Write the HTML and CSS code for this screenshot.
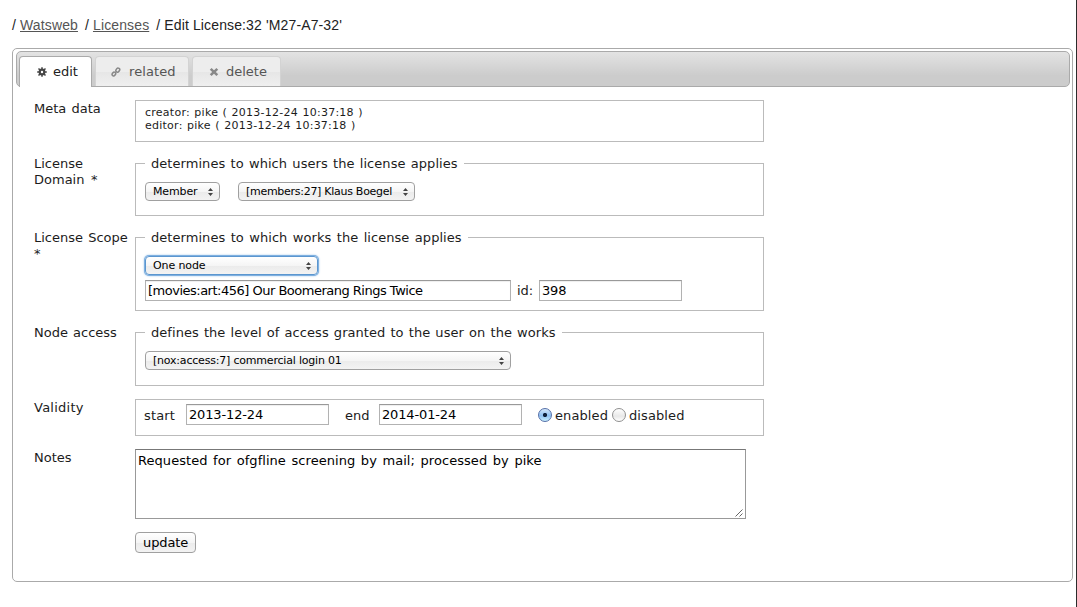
FILE: index.html
```html
<!DOCTYPE html>
<html lang="en">
<head>
<meta charset="utf-8">
<title>Edit License:32 'M27-A7-32'</title>
<link rel="stylesheet" href="styles.css">
</head>
<body>
<div class="page">
  <nav class="crumbs"><span class="sep">/</span><a>Watsweb</a><span class="sep next">/</span><a>Licenses</a><span class="sep next">/</span><span>Edit License:32 'M27-A7-32'</span></nav>
  <main class="panel">
    <div class="tabbar">
      <div class="tab active"><svg class="icon" width="10" height="10" viewBox="0 0 10 10"><path fill="none" stroke="#454545" stroke-width="1.5" d="M5 .2v9.6M.2 5h9.6M1.5 1.5l7 7M8.5 1.5l-7 7"/><circle cx="5" cy="5" r="3.4" fill="#454545"/><circle cx="5" cy="5" r="1.2" fill="#fff"/></svg><span>edit</span></div>
      <div class="tab related"><svg class="icon" width="10" height="10" viewBox="0 0 10 10"><g fill="none" stroke="#888" stroke-width="1.5"><rect x="5.2" y="1" width="3.2" height="4.2" rx="1.5" transform="rotate(35 6.8 3.1)"/><rect x="1.4" y="5" width="3" height="4" rx="1.5" transform="rotate(35 2.9 7)"/></g></svg><span>related</span></div>
      <div class="tab delete"><svg class="icon" width="10" height="10" viewBox="0 0 10 10"><path fill="none" stroke="#888" stroke-width="2.6" d="M1.7 1.9l6.6 6.2M8.3 1.9l-6.6 6.2"/></svg><span>delete</span></div>
    </div>
    <form class="form">
      <div class="row r-meta"><div class="label">Meta data</div>
        <fieldset>creator: pike ( 2013-12-24 10:37:18 )<br>editor: pike ( 2013-12-24 10:37:18 )</fieldset></div>
      <div class="row r-domain"><div class="label">License<br>Domain *</div>
        <fieldset><legend>determines to which users the license applies</legend>
          <div class="controls"><span class="select w75">Member<svg class="arrows" width="5" height="8" viewBox="0 0 5 8"><path fill="#444" d="M2.5 0L5 3H0zM2.5 8L0 5h5z"/></svg></span><span class="select tight w177">[members:27] Klaus Boegel<svg class="arrows" width="5" height="8" viewBox="0 0 5 8"><path fill="#444" d="M2.5 0L5 3H0zM2.5 8L0 5h5z"/></svg></span></div></fieldset></div>
      <div class="row r-scope"><div class="label">License Scope<br>*</div>
        <fieldset><legend>determines to which works the license applies</legend>
          <div class="controls"><span class="select focus w173">One node<svg class="arrows" width="5" height="8" viewBox="0 0 5 8"><path fill="#444" d="M2.5 0L5 3H0zM2.5 8L0 5h5z"/></svg></span></div>
          <div class="target"><span class="input title w366">[movies:art:456] Our Boomerang Rings Twice</span><span class="idlabel">id:</span><span class="input w143">398</span></div></fieldset></div>
      <div class="row r-access"><div class="label">Node access</div>
        <fieldset><legend>defines the level of access granted to the user on the works</legend>
          <div class="controls"><span class="select access w366">[nox:access:7] commercial login 01<svg class="arrows" width="5" height="8" viewBox="0 0 5 8"><path fill="#444" d="M2.5 0L5 3H0zM2.5 8L0 5h5z"/></svg></span></div></fieldset></div>
      <div class="row r-validity"><div class="label">Validity</div>
        <fieldset class="validity"><span class="start">start</span><span class="input w143">2013-12-24</span><span class="end">end</span><span class="input w143">2014-01-24</span><span class="radio on"></span><span class="rlabel">enabled</span><span class="radio"></span><span class="rlabel">disabled</span></fieldset></div>
      <div class="row r-notes"><div class="label">Notes</div>
        <div class="textarea">Requested for ofgfline screening by mail; processed by pike<svg class="grip" width="8" height="8" viewBox="0 0 8 8"><path fill="none" stroke="#555" stroke-width=".9" d="M.5 7.5l7-7M4.5 7.5l3-3"/></svg></div></div>
      <div class="row"><div class="label"></div><span class="button">update</span></div>
    </form>
  </main>
</div>
</body>
</html>
```
FILE: styles.css
```css
* { box-sizing: border-box; }
body { margin: 0; background: #fff; color: #1c1c1c; font: 13px/16px "DejaVu Sans", sans-serif; }
.page { height: 607px; border-right: 1px solid #2b2b2b; padding: 17px 3px 0 12px; overflow: hidden; }
.crumbs { height: 31px; font: 14px/17px "Liberation Sans", Arial, sans-serif; white-space: nowrap; color: #222; letter-spacing: 0.13px; }
.crumbs a { color: #555; text-decoration: underline; }
.sep { display: inline-block; width: 8px; }
.sep.next { width: 15px; padding-left: 7px; }
.panel { height: 534px; border: 1px solid #aaa; border-radius: 5px; padding: 2px 2px 2px 3px; }
.tabbar { height: 36px; border: 1px solid #aaa; border-radius: 5px; background: linear-gradient(#e3e3e3, #ccc 70%, #ccc); display: flex; padding: 4px 0 0 2px; gap: 3px; }
.tab { height: 30px; border: 1px solid #d3d3d3; border-bottom: 0; border-radius: 4px 4px 0 0; background: linear-gradient(#ededed 50%, #e6e6e6 50%, #efefef); color: #555; display: flex; align-items: center; }
.tab.active { width: 73px; height: 31px; border-color: #aaa; background: #fff; color: #212121; padding-left: 17px; }
.tab.related { width: 94px; padding-left: 15px; letter-spacing: 0.1px; }
.tab.delete { width: 89px; padding-left: 16px; }
.icon { margin-right: 6px; }
.related .icon { margin-right: 8px; }
.delete .icon { margin-right: 7px; }
.form { padding: 13px 0 0 18px; }
.row { display: flex; align-items: flex-start; white-space: nowrap; }
.label { width: 101px; flex: none; padding-top: 1px; word-spacing: 1px; }
fieldset { margin: 0; width: 629px; border: 1px solid #bbb; padding: 0 9px; min-width: 0; }
legend { height: 17px; line-height: 17px; padding: 0 6px; letter-spacing: 0.05px; word-spacing: 1.1px; }
.r-meta { height: 55px; } .r-domain { height: 74px; } .r-scope { height: 95px; }
.r-domain .label { word-spacing: 2.5px; }
.r-scope legend { word-spacing: 1.25px; }
.r-access legend { word-spacing: 0.95px; }
.r-access { height: 75px; } .r-validity { height: 50px; } .r-notes { height: 83px; }
.r-validity .label { letter-spacing: 0.25px; }
.r-meta fieldset { height: 42px; padding-top: 5px; font-size: 11px; line-height: 13px; letter-spacing: 0.25px; word-spacing: 0.7px; }
.r-domain fieldset { height: 61px; }
.r-scope fieldset { height: 82px; }
.r-access fieldset { height: 62px; }
.controls { display: flex; gap: 18px; padding-top: 10px; }
.select { height: 19px; border: 1px solid #a0a0a0; border-radius: 4px; background: linear-gradient(#fff, #f5f5f5 50%, #ebebeb 52%, #f3f3f3); color: #000; font-size: 11px; line-height: 17px; letter-spacing: -0.12px; padding: 0 6px 0 7px; display: flex; align-items: center; justify-content: space-between; }
.select.tight { letter-spacing: -0.28px; }
.select.access { letter-spacing: -0.2px; }
.focus { border-color: #5b96cf; box-shadow: 0 0 0 1px #7fb0e0, 0 0 2px 1px #9cc4ea; }
.w75 { width: 75px; } .w177 { width: 177px; } .w173 { width: 173px; } .w366 { width: 366px; } .w143 { width: 143px; }
.target { display: flex; align-items: center; padding-top: 5px; }
.input { height: 21px; border: 1px solid #b2b2b2; border-top-color: #999; background: #fff; box-shadow: inset 0 1px 1px #eee; color: #000; line-height: 19px; letter-spacing: -0.15px; padding-left: 2px; flex: none; }
.input.title { letter-spacing: -0.5px; }
.idlabel { width: 28px; padding-left: 6px; }
.validity { height: 37px; padding: 4px 0 0 8px; display: flex; }
.validity > span:not(.input) { flex: none; }
.start, .end, .rlabel { line-height: 24px; }
.start { width: 42px; letter-spacing: 0.15px; } .end { width: 50px; padding-left: 16px; }
.radio { width: 14px; height: 14px; margin-top: 4px; border: 1px solid #8f8f8f; border-radius: 50%; background: linear-gradient(#fff, #e8e8e8 60%, #fff); }
.radio.on { margin-left: 16px; border-color: #5670a8; background: radial-gradient(circle, #10213c 0 1.8px, transparent 2.4px), linear-gradient(#d5e8fb, #8fc0f2 55%, #c8f0ff); }
.rlabel { width: 60px; padding-left: 3px; letter-spacing: 0.1px; }
.textarea { position: relative; width: 611px; height: 70px; border: 1px solid #999; border-top-color: #777; color: #000; padding: 3px 2px; letter-spacing: 0.05px; word-spacing: 1.4px; }
.grip { position: absolute; right: 2px; bottom: 1px; }
.button { width: 61px; height: 21px; border: 1px solid #a0a0a0; border-radius: 4px; background: linear-gradient(#fff, #f5f5f5 50%, #ebebeb 52%, #f3f3f3); color: #000; line-height: 20px; letter-spacing: -0.1px; padding-left: 7px; }
```
